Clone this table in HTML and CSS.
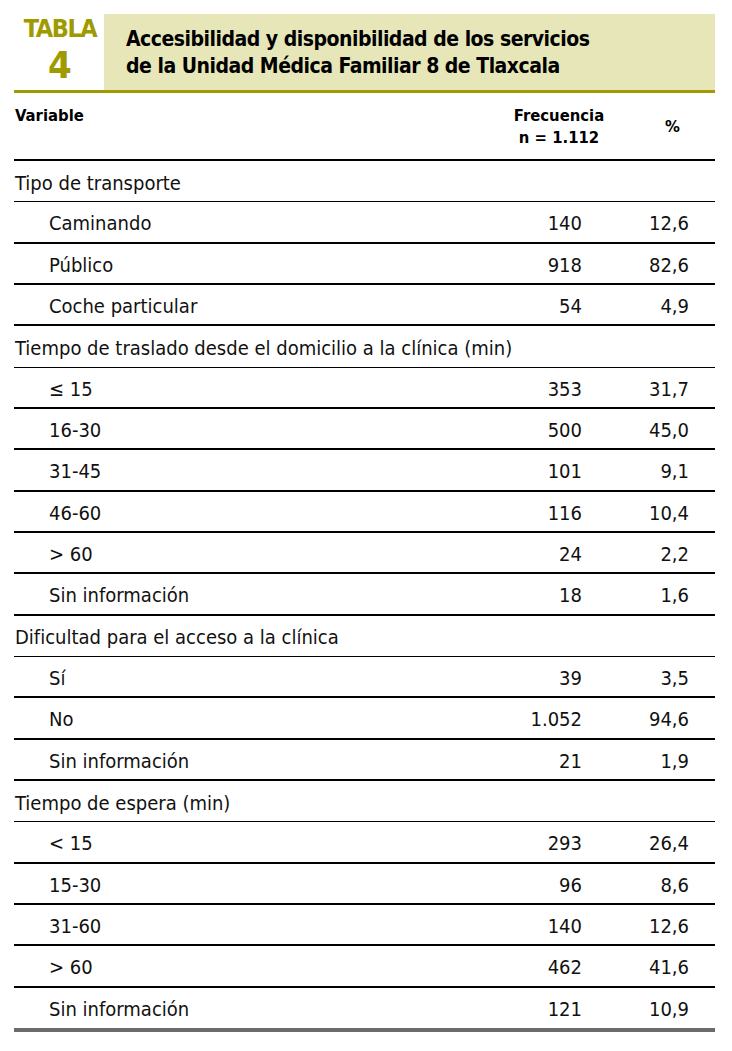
FILE: index.html
```html
<!DOCTYPE html>
<html lang="es">
<head>
<meta charset="utf-8">
<title>Tabla 4</title>
<link rel="stylesheet" href="styles.css">
</head>
<body>
<div class="page">
  <div class="caption">
    <div class="label"><span class="label-word">TABLA</span><span class="label-num">4</span></div>
    <div class="title">Accesibilidad y disponibilidad de los servicios<br>de la Unidad Médica Familiar 8 de Tlaxcala</div>
  </div>
  <div class="head">
    <div class="c-var">Variable</div>
    <div class="c-freq">Frecuencia<br>n = 1.112</div>
    <div class="c-pct">%</div>
  </div>
  <div class="row cat"><div class="c-var">Tipo de transporte</div></div>
  <div class="row"><div class="c-var sub">Caminando</div><div class="c-freq">140</div><div class="c-pct">12,6</div></div>
  <div class="row"><div class="c-var sub">Público</div><div class="c-freq">918</div><div class="c-pct">82,6</div></div>
  <div class="row"><div class="c-var sub">Coche particular</div><div class="c-freq">54</div><div class="c-pct">4,9</div></div>
  <div class="row cat"><div class="c-var">Tiempo de traslado desde el domicilio a la clínica (min)</div></div>
  <div class="row"><div class="c-var sub">≤ 15</div><div class="c-freq">353</div><div class="c-pct">31,7</div></div>
  <div class="row"><div class="c-var sub">16-30</div><div class="c-freq">500</div><div class="c-pct">45,0</div></div>
  <div class="row"><div class="c-var sub">31-45</div><div class="c-freq">101</div><div class="c-pct">9,1</div></div>
  <div class="row"><div class="c-var sub">46-60</div><div class="c-freq">116</div><div class="c-pct">10,4</div></div>
  <div class="row"><div class="c-var sub">&gt; 60</div><div class="c-freq">24</div><div class="c-pct">2,2</div></div>
  <div class="row"><div class="c-var sub">Sin información</div><div class="c-freq">18</div><div class="c-pct">1,6</div></div>
  <div class="row cat"><div class="c-var">Dificultad para el acceso a la clínica</div></div>
  <div class="row"><div class="c-var sub">Sí</div><div class="c-freq">39</div><div class="c-pct">3,5</div></div>
  <div class="row"><div class="c-var sub">No</div><div class="c-freq">1.052</div><div class="c-pct">94,6</div></div>
  <div class="row"><div class="c-var sub">Sin información</div><div class="c-freq">21</div><div class="c-pct">1,9</div></div>
  <div class="row cat"><div class="c-var">Tiempo de espera (min)</div></div>
  <div class="row"><div class="c-var sub">&lt; 15</div><div class="c-freq">293</div><div class="c-pct">26,4</div></div>
  <div class="row"><div class="c-var sub">15-30</div><div class="c-freq">96</div><div class="c-pct">8,6</div></div>
  <div class="row"><div class="c-var sub">31-60</div><div class="c-freq">140</div><div class="c-pct">12,6</div></div>
  <div class="row"><div class="c-var sub">&gt; 60</div><div class="c-freq">462</div><div class="c-pct">41,6</div></div>
  <div class="row last"><div class="c-var sub">Sin información</div><div class="c-freq">121</div><div class="c-pct">10,9</div></div>
</div>
</body>
</html>
```
FILE: styles.css
```css
html, body {
  margin: 0;
  padding: 0;
  background: #fff;
}
* {
  box-sizing: border-box;
}
body {
  font-family: "DejaVu Sans Condensed", "DejaVu Sans", sans-serif;
  font-stretch: condensed;
  color: #111;
}
.page {
  width: 715px;
  padding: 14px 0 0 14px;
}
.caption {
  display: flex;
  height: 79px;
  border-bottom: 3px solid #9f9a00;
}
.label {
  width: 90px;
  display: flex;
  flex-direction: column;
  align-items: center;
  color: #9f9a00;
  font-weight: bold;
  padding-left: 2px;
}
.label-word {
  font-size: 25px;
  line-height: normal;
  letter-spacing: -1.4px;
}
.label-num {
  font-size: 38px;
  line-height: normal;
}
.title {
  flex: 1;
  background: #e6e6b9;
  font-weight: bold;
  font-size: 21px;
  line-height: 27px;
  letter-spacing: -0.5px;
  padding: 12px 0 0 22px;
  color: #000;
}
.head {
  display: flex;
  height: 68px;
  border-bottom: 2px solid #000;
  font-weight: bold;
  font-size: 16.5px;
  line-height: 22px;
  color: #000;
}
.head .c-var {
  flex: 1;
  padding-top: 12px;
  padding-left: 1px;
}
.head .c-freq {
  text-align: center;
  padding-top: 12px;
  width: 120px;
}
.head .c-pct {
  padding-top: 23px;
  width: 96px;
  padding-left: 46px;
}
.row {
  display: flex;
  align-items: center;
  height: 41.33px;
  border-bottom: 2px solid #000;
  font-size: 20px;
  color: #111;
  padding-top: 3px;
}
.row.cat {
  border-bottom-width: 1px;
}
.row.last {
  height: 44.33px;
  border-bottom: 4px solid #6b6b6b;
}
.row .c-var {
  flex: 1;
  padding-left: 1px;
}
.row .c-var.sub {
  padding-left: 35px;
}
.row .c-freq {
  width: 80px;
  text-align: right;
}
.row .c-pct {
  width: 133px;
  padding-right: 26px;
  text-align: right;
}
```
